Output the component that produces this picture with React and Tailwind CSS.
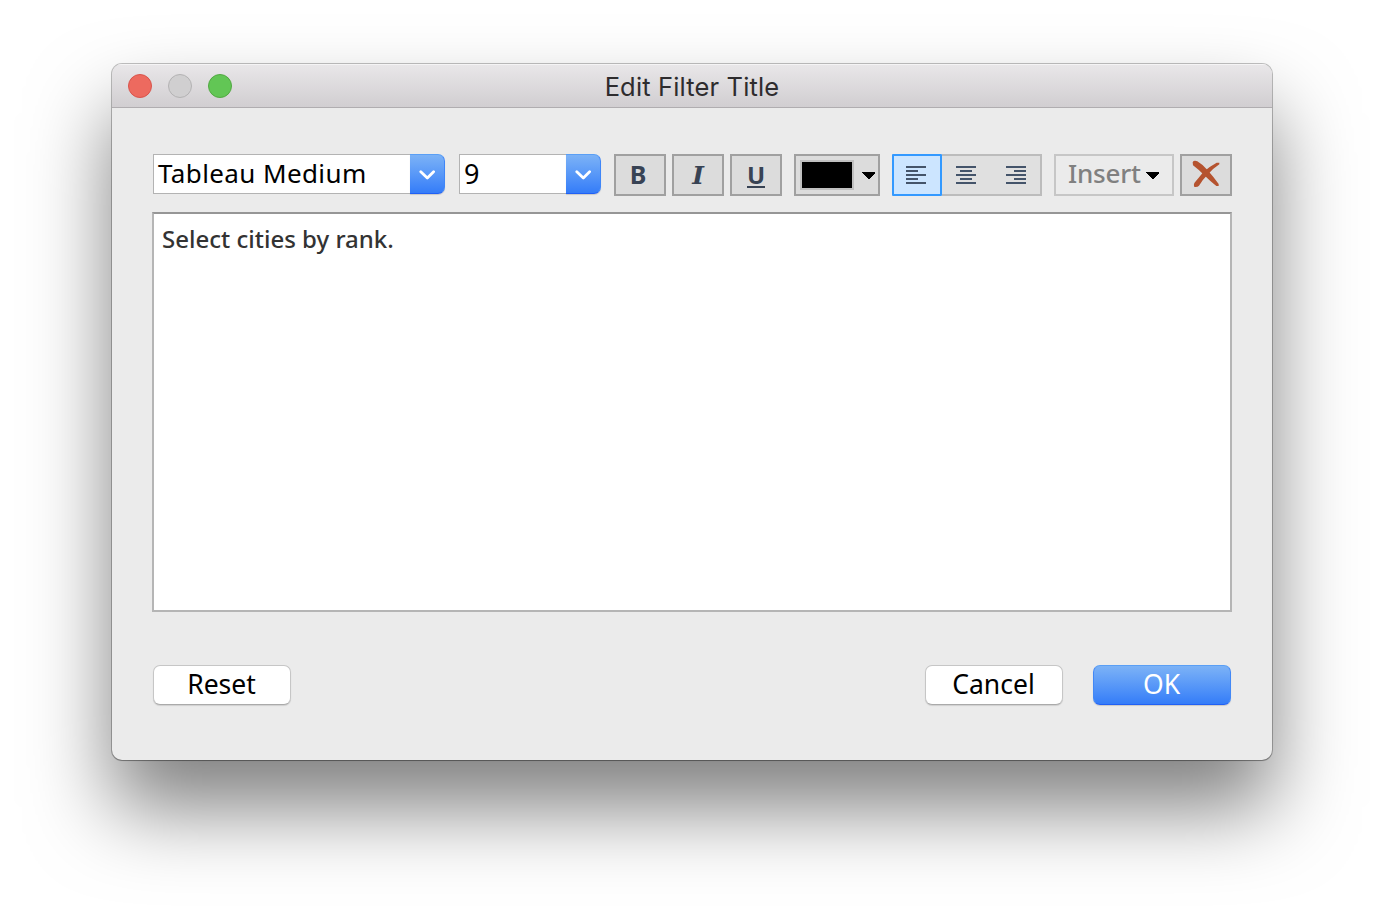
import clsx from 'clsx';

const UI_FONT = "font-['Noto_Sans','Open_Sans',sans-serif]";

function TrafficLight({ className }) {
  return <span className={clsx('h-6 w-6 rounded-full border', className)} />;
}

function ComboBox({ value, className, textClass }) {
  return (
    <div className={clsx('flex h-10 shrink-0', className)}>
      <div className="flex min-w-0 flex-1 items-center border border-r-0 border-[#b3b3b3] bg-white pb-0.5 pl-1">
        <span className={clsx('leading-none whitespace-nowrap text-black', textClass)}>{value}</span>
      </div>
      <div className="flex w-[35px] items-center justify-center rounded-r-[7px] border border-l-0 border-t-[#5a9ff5] border-r-[#3f86f8] border-b-[#2060f5] bg-linear-to-b from-[#7cb2f6] to-[#347cf8] pt-px shadow-[0_1px_1px_rgba(0,0,0,0.15)]">
        <svg width="16" height="10" viewBox="0 0 16 10" fill="none">
          <path d="M1.8 1.7 L8.3 7.9 L14.6 1.7" stroke="white" strokeWidth="2.8" strokeLinecap="round" strokeLinejoin="round" />
        </svg>
      </div>
    </div>
  );
}

function ToolButton({ children, className }) {
  return (
    <div className={clsx('flex h-[42px] shrink-0 border-2', className)}>
      {children}
    </div>
  );
}

function DownTriangle() {
  return (
    <svg width="14" height="7" viewBox="0 0 14 7" shapeRendering="crispEdges">
      <path d="M0 0 H13.3 V1 L7 7 H6.3 L0 1 Z" fill="black" />
    </svg>
  );
}

// Each entry is the [x, width] of one bar, top to bottom
const alignBars = {
  left: [[0, 20], [0, 12], [0, 20], [0, 12], [0, 20]],
  center: [[0, 20], [4, 12], [0, 20], [4, 12], [0, 20]],
  right: [[0, 20], [8, 12], [0, 20], [8, 12], [0, 20]],
};

function AlignIcon({ kind }) {
  return (
    <svg width="20" height="18" viewBox="0 0 20 18" fill="#44546a" shapeRendering="crispEdges">
      {alignBars[kind].map(([x, w], i) => (
        <rect key={i} x={x} y={i * 4} width={w} height="2" />
      ))}
    </svg>
  );
}

function DialogButton({ children, primary, className }) {
  return (
    <button
      className={clsx(
        'flex h-10 w-[138px] items-center justify-center rounded-[7px] border pr-px pb-0.5 text-[26.5px] leading-none',
        primary
          ? 'border-t-[#5a9ff5] border-x-[#4288f6] border-b-[#2060f5] bg-linear-to-b from-[#7cb2f6] to-[#347cf8] text-white shadow-[0_1px_1px_rgba(0,0,0,0.15)]'
          : 'border-[#c6c6c6] border-b-[#aaaaaa] bg-white text-black shadow-[0_1px_1px_rgba(0,0,0,0.12)]',
        className
      )}
    >
      {children}
    </button>
  );
}

export default function App() {
  return (
    <div className={clsx('h-[920px] w-[1384px] overflow-hidden bg-white px-28 pt-16', UI_FONT)}>
      <div className="flex h-[696px] w-[1160px] flex-col overflow-hidden rounded-[10px] bg-[#ebebeb] shadow-[0_0_0_1px_rgba(0,0,0,0.24),0_1px_1px_rgba(0,0,0,0.2),0_48px_82px_rgba(0,0,0,0.5)]">
        {/* Title bar */}
        <div className="grid h-11 shrink-0 grid-cols-[1fr_auto_1fr] items-center border-b border-[#b0adb0] bg-linear-to-b from-[#e9e7e9] to-[#d1ced1] px-4 shadow-[inset_0_1px_0_#f5f4f5]">
          <div className="flex gap-4">
            <TrafficLight className="border-[#d8544c] bg-[#ed6a5f]" />
            <TrafficLight className="border-[#b3b2b3] bg-[#d0cfd0]" />
            <TrafficLight className="border-[#52a842] bg-[#62c655]" />
          </div>
          <h1 className="pt-[3px] font-['Inter',sans-serif] text-[25.5px] leading-none tracking-[0.15px] text-[#2e2c2e]">
            Edit Filter Title
          </h1>
        </div>

        {/* Formatting toolbar */}
        <div className="flex h-[104px] shrink-0 items-start pt-[46px] pl-[41px]">
          <ComboBox value="Tableau Medium" className="w-[292px]" textClass="text-[26px] tracking-[0.4px]" />
          <ComboBox value="9" className="ml-3.5 w-[142px]" textClass="text-[27px]" />

          <div className="ml-[13px] flex gap-1.5 leading-none font-bold text-[#384354]">
            <ToolButton className="w-[52px] items-center justify-center border-[#a0a0a0] bg-[#dcdcdc] pr-1 pb-0.5">
              <span className="text-[25px]">B</span>
            </ToolButton>
            <ToolButton className="w-[52px] items-center justify-center border-[#a0a0a0] bg-[#dcdcdc]">
              <span className="font-['DejaVu_Serif','Liberation_Serif',serif] text-[25px] italic">I</span>
            </ToolButton>
            <ToolButton className="w-[52px] items-center justify-center border-[#a0a0a0] bg-[#dcdcdc] pt-0.5">
              <span className="border-b-2 border-[#384354] text-[24px] leading-[22px]">U</span>
            </ToolButton>
          </div>

          <ToolButton className="ml-3 w-[86px] items-center border-[#a0a0a0] bg-[#dcdcdc] pl-1">
            <span className="h-[30px] w-[54px] border-2 border-[#c0c0c0] bg-black" />
            <span className="ml-2">
              <DownTriangle />
            </span>
          </ToolButton>

          <div className="ml-3 flex h-[42px] w-[150px]">
            <div className="flex w-[50px] items-center justify-center rounded-[1px] border-2 border-[#3399ff] bg-[#cce5ff] pr-0.5">
              <AlignIcon kind="left" />
            </div>
            <div className="flex flex-1 items-center gap-[30px] border-2 border-l-0 border-[#bcbcbc] bg-[#e0e0e0] pl-3.5">
              <AlignIcon kind="center" />
              <AlignIcon kind="right" />
            </div>
          </div>

          <ToolButton className="ml-3 w-[120px] items-center border-[#c6c6c6] bg-[#ebebeb] pl-3">
            <span className="pb-1 text-[26px] leading-none font-medium tracking-[-0.2px] text-[#808080]">Insert</span>
            <span className="ml-auto pr-3">
              <DownTriangle />
            </span>
          </ToolButton>
          <ToolButton className="ml-1.5 w-[52px] border-[#a0a0a0] bg-[#dcdcdc]">
            <svg width="48" height="38" viewBox="426 48 144 114" fill="#b5532f">
              <path d="M458 67 Q461 60 472 64 Q489 74 503 91 Q519 109 536 132 L536 138 L529 138 Q509 122 492 105 Q476 89 459 76 Z" />
              <path d="M538 68 L538 73 Q517 87 504 103 Q488 119 477 137 Q473 142 463 141 Q460 135 463 129 Q479 110 490 96 Q509 79 530 68 Z" />
            </svg>
          </ToolButton>
        </div>

        {/* Title text */}
        <div className="mx-10 h-[400px] shrink-0 border-2 border-[#b5b5b5] border-t-[#969696] bg-white px-2 pt-2.5">
          <p className="text-[24px] leading-[30px] font-medium text-[#333333]">Select cities by rank.</p>
        </div>

        {/* Actions */}
        <div className="mx-[41px] mt-[53px] flex">
          <DialogButton>Reset</DialogButton>
          <DialogButton className="ml-auto">Cancel</DialogButton>
          <DialogButton primary className="ml-[30px]">OK</DialogButton>
        </div>
      </div>
    </div>
  );
}
